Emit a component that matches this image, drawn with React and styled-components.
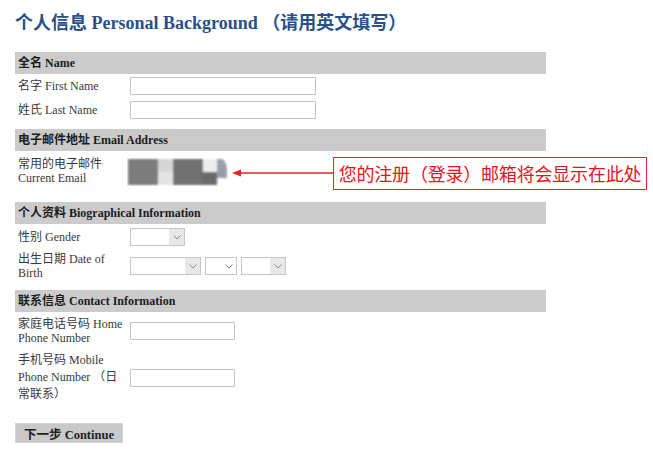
import React from "react";
import styled, { createGlobalStyle } from "styled-components";

const Global = createGlobalStyle`
  html, body { margin: 0; padding: 0; background: #ffffff; }
  body {
    font-family: "Liberation Serif", "Noto Sans CJK SC", serif;
    color: #333;
  }
  * { box-sizing: border-box; }
`;

const Page = styled.div`
  width: 653px;
  height: 453px;
  padding: 11px 0 0 15px;
  overflow: hidden;
`;

const Title = styled.h1`
  margin: 0 0 17px 0;
  font-size: 18px;
  line-height: 24px;
  font-weight: bold;
  color: #2a5187;
  white-space: nowrap;
`;

const Form = styled.div`
  width: 531px;
`;

const Section = styled.section`
  margin-bottom: 7px;
`;

const SectionHeader = styled.div`
  height: 22px;
  line-height: 22px;
  padding-left: 3px;
  background: #cbcbcc;
  font-size: 12px;
  font-weight: bold;
  color: #1c1c1c;
  white-space: nowrap;
`;

const Row = styled.div`
  display: flex;
  align-items: ${(p) => (p.$top ? "flex-start" : "center")};
  padding: ${(p) => p.$pad || "3px 0"};
  white-space: nowrap;
`;

const Label = styled.div`
  width: 108px;
  margin-left: 3px;
  margin-right: 4px;
  flex: none;
  font-size: 12px;
  line-height: ${(p) => p.$lh || "14px"};
  color: #3a3a3a;
  white-space: normal;
`;

const TextInput = styled.input`
  width: ${(p) => p.$w}px;
  height: 18px;
  margin: 0;
  padding: 0 3px;
  border: 1px solid #c2c2c2;
  border-radius: 1px;
  background: #fff;
  font: inherit;
  outline: none;
`;

const SelectBox = styled.div`
  position: relative;
  width: ${(p) => p.$w}px;
  height: 18px;
  margin-right: 4px;
  border: 1px solid #c6c6c6;
  background: #fff;
  display: flex;
  justify-content: flex-end;
`;

const SelectArrow = styled.div`
  width: 15px;
  height: 100%;
  background: ${(p) => (p.$plain ? "transparent" : "#e8e8e8")};
  display: flex;
  align-items: center;
  justify-content: center;
`;

const Chevron = () => (
  <svg width="8" height="5" viewBox="0 0 8 5">
    <path d="M0.5 0.5 L4 4 L7.5 0.5" fill="none" stroke="#8a8a8a" strokeWidth="1" />
  </svg>
);

const Select = ({ w, plain }) => (
  <SelectBox $w={w}>
    <SelectArrow $plain={plain}>
      <Chevron />
    </SelectArrow>
  </SelectBox>
);

const Blurred = styled.svg`
  flex: none;
  margin-top: 1px;
  margin-left: -3px;
`;

const Arrow = styled.svg`
  flex: none;
  margin-left: 4px;
`;

const Callout = styled.div`
  flex: none;
  width: 314px;
  height: 33px;
  border: 1.5px solid #e8242a;
  color: #e8141b;
  font-family: "Noto Sans CJK SC", sans-serif;
  font-size: 18px;
  line-height: 30px;
  text-align: center;
  letter-spacing: -0.2px;
  padding: 0;
`;

const Button = styled.button`
  display: block;
  margin-top: 20px;
  width: 108px;
  height: 20px;
  padding: 0;
  border: 1px solid #d4d4d4;
  background: #c9c9c9;
  font-family: "Liberation Serif", "Noto Sans CJK SC", serif;
  font-size: 12.5px;
  font-weight: bold;
  color: #222;
  cursor: pointer;
`;

export default function App() {
  return (
    <>
      <Global />
      <Page>
        <Title>个人信息 Personal Background （请用英文填写）</Title>
        <Form>
          <Section>
            <SectionHeader>全名 Name</SectionHeader>
            <Row>
              <Label>名字 First Name</Label>
              <TextInput $w={186} />
            </Row>
            <Row>
              <Label>姓氏 Last Name</Label>
              <TextInput $w={186} />
            </Row>
          </Section>

          <Section>
            <SectionHeader>电子邮件地址 Email Address</SectionHeader>
            <Row $top $pad="6px 0 5px 0">
              <Label>常用的电子邮件 Current Email</Label>
              <Blurred width="101" height="28" viewBox="0 0 101 28">
                <defs>
                  <filter id="bl" x="-10%" y="-10%" width="120%" height="120%">
                    <feGaussianBlur stdDeviation="1.2" />
                  </filter>
                </defs>
                <g filter="url(#bl)">
                  <rect x="1" y="1" width="30" height="26" fill="#7c7c7c" />
                  <rect x="31" y="1" width="15" height="13" fill="#d6d6d6" />
                  <rect x="31" y="14" width="15" height="13" fill="#e4e4e4" />
                  <rect x="46" y="1" width="30" height="26" fill="#717171" />
                  <rect x="76" y="1" width="14" height="13" fill="#eeeeee" />
                  <rect x="76" y="14" width="14" height="13" fill="#6b6b6b" />
                  <path d="M90 1 H95 Q100 4 100 12 V20 H90 Z" fill="#9b9caa" />
                </g>
              </Blurred>
              <Arrow width="101" height="33" viewBox="0 0 101 33">
                <line x1="5" y1="16" x2="101" y2="16" stroke="#e8242a" strokeWidth="1.5" />
                <polygon points="0,16 9,12.5 9,19.5" fill="#e8242a" />
              </Arrow>
              <Callout>您的注册（登录）邮箱将会显示在此处</Callout>
            </Row>
          </Section>

          <Section>
            <SectionHeader>个人资料 Biographical Information</SectionHeader>
            <Row $pad="4px 0 4px 0">
              <Label>性别 Gender</Label>
              <Select w={55} />
            </Row>
            <Row $pad="2px 0 3px 0">
              <Label>出生日期 Date of Birth</Label>
              <Select w={71} />
              <Select w={32} plain />
              <Select w={45} />
            </Row>
          </Section>

          <Section>
            <SectionHeader>联系信息 Contact Information</SectionHeader>
            <Row $pad="5px 0 0 0">
              <Label>家庭电话号码 Home Phone Number</Label>
              <TextInput $w={105} />
            </Row>
            <Row $pad="7px 0 0 0">
              <Label $lh="17px">手机号码 Mobile Phone Number （日常联系）</Label>
              <TextInput $w={105} />
            </Row>
          </Section>

          <Button>下一步 Continue</Button>
        </Form>
      </Page>
    </>
  );
}
